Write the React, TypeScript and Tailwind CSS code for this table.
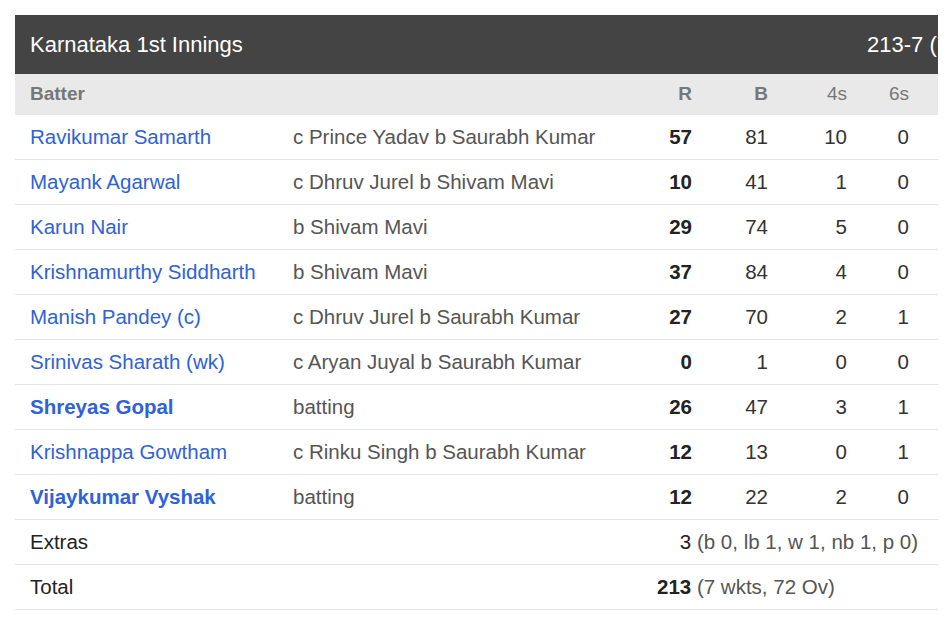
const batters = [
  { name: 'Ravikumar Samarth', how: 'c Prince Yadav b Saurabh Kumar', r: 57, b: 81, f: 10, s: 0 },
  { name: 'Mayank Agarwal', how: 'c Dhruv Jurel b Shivam Mavi', r: 10, b: 41, f: 1, s: 0 },
  { name: 'Karun Nair', how: 'b Shivam Mavi', r: 29, b: 74, f: 5, s: 0 },
  { name: 'Krishnamurthy Siddharth', how: 'b Shivam Mavi', r: 37, b: 84, f: 4, s: 0 },
  { name: 'Manish Pandey (c)', how: 'c Dhruv Jurel b Saurabh Kumar', r: 27, b: 70, f: 2, s: 1 },
  { name: 'Srinivas Sharath (wk)', how: 'c Aryan Juyal b Saurabh Kumar', r: 0, b: 1, f: 0, s: 0 },
  { name: 'Shreyas Gopal', how: 'batting', r: 26, b: 47, f: 3, s: 1, batting: true },
  { name: 'Krishnappa Gowtham', how: 'c Rinku Singh b Saurabh Kumar', r: 12, b: 13, f: 0, s: 1 },
  { name: 'Vijaykumar Vyshak', how: 'batting', r: 12, b: 22, f: 2, s: 0, batting: true },
];

export default function App() {
  return (
    <div className="min-h-screen bg-white pt-[15px] pl-[15px]" style={{ fontFamily: '"Liberation Sans", Arial, sans-serif' }}>
      <div className="w-[923px] overflow-hidden">
        {/* Title bar */}
        <div className="flex h-[59px] items-center bg-[#444444] pl-[15px] text-[22px] text-white">
          <span className="flex-1 whitespace-nowrap">Karnataka 1st Innings</span>
          <span className="w-[71px] shrink-0 whitespace-nowrap">213-7 (72 Ov)</span>
        </div>

        {/* Column header */}
        <div className="flex h-[41px] items-center bg-[#e9e9e9] text-[19px] font-semibold text-[#777]">
          <div className="w-[278px] pl-[15px]">Batter</div>
          <div className="flex-1"></div>
          <div className="w-[50px] text-right">R</div>
          <div className="w-[76px] text-right">B</div>
          <div className="w-[79px] text-right font-normal">4s</div>
          <div className="w-[62px] text-right font-normal">6s</div>
          <div className="w-[29px]"></div>
        </div>

        {batters.map((p) => (
          <div key={p.name} className="flex h-[45px] items-center border-b border-[#e4e4e4] text-[20.5px]">
            <div className={`w-[278px] whitespace-nowrap pl-[15px] text-[#2e62d6] ${p.batting ? 'font-bold' : ''}`}>
              {p.name}
            </div>
            <div className="flex-1 whitespace-nowrap text-[#555]">{p.how}</div>
            <div className="w-[50px] text-right font-bold text-[#222]">{p.r}</div>
            <div className="w-[76px] text-right text-[#333]">{p.b}</div>
            <div className="w-[79px] text-right text-[#333]">{p.f}</div>
            <div className="w-[62px] text-right text-[#333]">{p.s}</div>
            <div className="w-[29px]"></div>
          </div>
        ))}

        {/* Extras */}
        <div className="flex h-[45px] items-center border-b border-[#e4e4e4] text-[20.5px]">
          <div className="w-[278px] pl-[15px] text-[#222]">Extras</div>
          <div className="flex-1 whitespace-nowrap pr-[20px] text-right">
            <span className="text-[#222]">3</span>
            <span className="text-[#555]"> (b 0, lb 1, w 1, nb 1, p 0)</span>
          </div>
        </div>

        {/* Total */}
        <div className="flex h-[45px] items-center border-b border-[#e4e4e4] text-[20.5px]">
          <div className="w-[642px] pl-[15px] text-[#222]">Total</div>
          <div className="flex-1 whitespace-nowrap">
            <span className="font-bold text-[#222]">213</span>
            <span className="text-[#555]"> (7 wkts, 72 Ov)</span>
          </div>
        </div>
      </div>
    </div>
  );
}
